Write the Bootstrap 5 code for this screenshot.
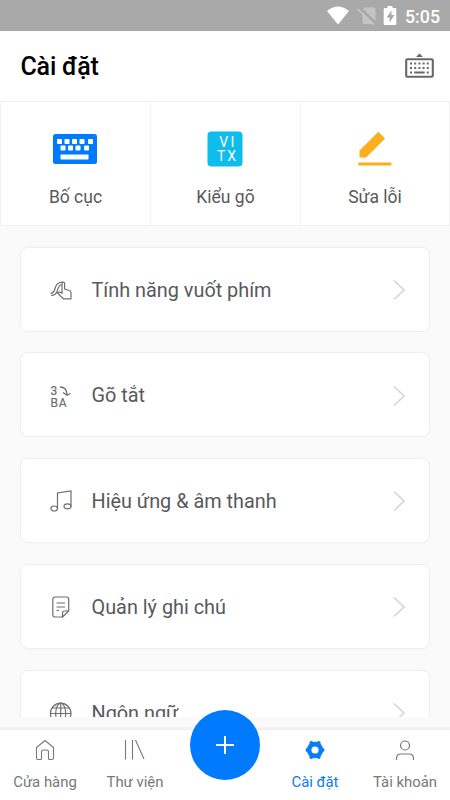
<!DOCTYPE html>
<html lang="vi">
<head>
<meta charset="utf-8">
<meta name="viewport" content="width=device-width, initial-scale=1">
<title>Cài đặt</title>
<link href="https://cdn.jsdelivr.net/npm/bootstrap@5.3.0/dist/css/bootstrap.min.css" rel="stylesheet">
<style>
  body { font-family: Roboto, "Noto Sans", sans-serif; color: #58595b; background: #fafafa; }
  svg { display: block; flex: none; }
  .screen { height: 800px; }
  .status-bar { height: 31px; background: #a9a9a9; font-size: 17.8px; padding: 2px 10px 0 0; }
  .app-header { height: 70px; padding: 0 16px 0 20.5px; }
  .app-title { font-size: 25px; letter-spacing: -.2px; padding-top: 2px; }
  .tiles { height: 125px; }
  .tile { border: 1px solid #f2f2f2; border-right-width: 0; padding-top: 21px; }
  .tile:last-child { border-right-width: 1px; }
  .tile-icon { height: 51px; }
  .tile-label { font-size: 17.5px; line-height: 24px; margin-top: 11px; }
  .settings { height: 491px; padding: 20.5px 20px 0; gap: 20.8px; }
  .setting { height: 85px; flex: none; border: 1px solid #f0f0f0; border-radius: 8px; box-shadow: 0 0 2px #f3f3f3; font-size: 19.85px; padding: 1.5px 23px 0 28px; }
  .setting-name { margin-left: 18.5px; padding-top: 1.5px; }
  .bottom-nav { height: 83px; padding-top: 13px; }
  .nav-panel { height: 70px; box-shadow: 0 -1px 2px 1px #ededed; }
  .nav-cell { font-size: 14.9px; line-height: 20px; padding-top: 8px; color: #77787a; }
  .nav-cell .nav-text { margin-top: 10.2px; white-space: nowrap; }
  .nav-cell.current { color: #0b7cf4; }
  .add-btn { width: 70px; height: 70px; background: #007aff; top: -20px; left: 190px; }
</style>
</head>
<body>
<div class="screen d-flex flex-column overflow-hidden">
  <div class="status-bar d-flex align-items-center justify-content-end text-white fw-medium flex-shrink-0">
    <svg width="78" height="31" viewBox="0 1 78 31">
      <path d="M11 24.500L0 11Q11 2 22 11Z" fill="#fff"/>
      <path d="M37.500 7.500H47q1.500 0 1.500 1.500v12L36 9ZM35.500 12.500l12 11.500H37q-1.500 0-1.500-1.500Z" fill="#c4c4c4"/>
      <path d="M30.500 9l16 15.500" stroke="#c9c9c9" stroke-width="1.500"/>
      <path d="M60.500 6v2h-2.800q-1 0-1 1v15q0 1 1 1h10.600q1 0 1-1V9q0-1-1-1h-2.800V6Z" fill="#fff"/>
      <path d="M64.500 10.500l-5 7h3V22.500l5-7.500h-3Z" fill="#a9a9a9"/>
    </svg>
    <span class="lh-1">5:05</span>
  </div>

  <header class="app-header bg-white d-flex align-items-center justify-content-between flex-shrink-0">
    <div class="app-title fw-medium text-black">Cài đặt</div>
    <svg width="29" height="26" viewBox="0 0 29 26" fill="#66686a">
      <path d="M11 4L14.500.500l3.500 3.500Z"/>
      <rect x="1.200" y="6.200" width="26.600" height="17.600" rx="1" fill="none" stroke="#66686a" stroke-width="2.100"/>
      <path d="M5 9.500h2v2H5zM9.200 9.500h2v2h-2zM13.400 9.500h2v2h-2zM17.600 9.500h2v2h-2zM21.800 9.500h2v2h-2zM5 14h2v2H5zM9.200 14h2v2h-2zM13.400 14h2v2h-2zM17.600 14h2v2h-2zM21.800 14h2v2h-2zM5 18.500h2v2H5zM9.200 18.500h10.400v2H9.200zM21.800 18.500h2v2h-2z"/>
    </svg>
  </header>

  <div class="tiles row g-0 text-center bg-white flex-shrink-0">
    <div class="tile col-4">
      <div class="tile-icon d-flex justify-content-center align-items-center">
        <svg width="44" height="30" viewBox="0 0 44 30"><rect width="44" height="30" rx="2.500" fill="#007aff"/>
          <g fill="#fff"><rect x="4" y="5" width="5" height="5" rx=".8"/><rect x="11.500" y="5" width="5" height="5" rx=".8"/><rect x="19" y="5" width="5" height="5" rx=".8"/><rect x="26.500" y="5" width="5" height="5" rx=".8"/><rect x="35" y="5" width="5" height="5" rx=".8"/>
          <rect x="7.500" y="11.500" width="5" height="5" rx=".8"/><rect x="15" y="11.500" width="5" height="5" rx=".8"/><rect x="22.500" y="11.500" width="5" height="5" rx=".8"/><rect x="31" y="11.500" width="5" height="5" rx=".8"/><rect x="7.500" y="20.500" width="28" height="5" rx=".8"/></g></svg>
      </div>
      <div class="tile-label">Bố cục</div>
    </div>
    <div class="tile col-4">
      <div class="tile-icon d-flex justify-content-center align-items-center">
        <svg width="36" height="36" viewBox="0 0 36 36"><rect x=".5" y=".5" width="35" height="35" rx="4" fill="#0fbcee"/>
          <g fill="#fff" font-size="14"><text x="12.200" y="15.500" textLength="15">VI</text><text x="10" y="29.500" textLength="19">TX</text></g></svg>
      </div>
      <div class="tile-label">Kiểu gõ</div>
    </div>
    <div class="tile col-4">
      <div class="tile-icon d-flex justify-content-center align-items-center">
        <svg width="34" height="36" viewBox="0 0 34 36" fill="#fbaf1c"><path d="M1.500 26.500V19.500L20.300.8l6.800 6.800-19 18.900ZM.3 31.500h33v3H.3z"/></svg>
      </div>
      <div class="tile-label">Sửa lỗi</div>
    </div>
  </div>

  <main class="settings d-flex flex-column overflow-hidden flex-shrink-0">
    <div class="setting bg-white d-flex align-items-center">
      <svg width="24" height="24" viewBox="0 0 24 24" fill="none" stroke="#6d6e70" stroke-width="1.200" stroke-linejoin="round">
        <path d="M1.500 15.500q3.500-.5 4.500-5 1.500-6.300 7.500-6.300M2 17.500q5 0 6.500-5 1-5 4-6"/><path d="M11.500 18l-3-3q1.500-1.700 4.500.3V5q1.300-1.800 2.600 0v6l4.600 1.500q1.800.5 1.800 2.300v6h-7.600L11.500 18"/>
      </svg>
      <span class="setting-name">Tính năng vuốt phím</span>
      <svg class="ms-auto" width="14" height="22" viewBox="0 0 14 22" fill="none" stroke="#d5d5d5" stroke-width="1.600"><path d="M2 1.500l10 9.500L2 20.500"/></svg>
    </div>
    <div class="setting bg-white d-flex align-items-center">
      <svg width="24" height="24" viewBox="0 0 24 24">
        <g fill="#6d6e70" stroke="#6d6e70" stroke-width=".2" font-size="12"><text x="1.500" y="10.500">3</text><text x="1.500" y="22.500" textLength="16">BA</text></g>
        <path d="M11 3q7 0 7 8M14 8.500l4 2.800 3.500-1.800" fill="none" stroke="#6d6e70" stroke-width="1.300"/>
      </svg>
      <span class="setting-name">Gõ tắt</span>
      <svg class="ms-auto" width="14" height="22" viewBox="0 0 14 22" fill="none" stroke="#d5d5d5" stroke-width="1.600"><path d="M2 1.500l10 9.500L2 20.500"/></svg>
    </div>
    <div class="setting bg-white d-flex align-items-center">
      <svg width="24" height="24" viewBox="0 0 24 24" fill="none" stroke="#6d6e70" stroke-width="1.200">
        <path d="M8.500 20V4L22 2V18"/><ellipse cx="5.200" cy="19.500" rx="3.300" ry="2.500"/><ellipse cx="18.500" cy="17.300" rx="3.500" ry="2.500"/>
      </svg>
      <span class="setting-name">Hiệu ứng &amp; âm thanh</span>
      <svg class="ms-auto" width="14" height="22" viewBox="0 0 14 22" fill="none" stroke="#d5d5d5" stroke-width="1.600"><path d="M2 1.500l10 9.500L2 20.500"/></svg>
    </div>
    <div class="setting bg-white d-flex align-items-center">
      <svg width="24" height="24" viewBox="0 0 24 24" fill="none" stroke="#6d6e70" stroke-width="1.200">
        <path d="M13.500 22H6q-2.200 0-2.200-2.200V4.200Q3.800 2 6 2h11.500q2.200 0 2.200 2.200V16l-6.200 6v-4q0-2 2-2h4.200M7.500 8H16M7.500 12H16M7.500 15.500H10"/>
      </svg>
      <span class="setting-name">Quản lý ghi chú</span>
      <svg class="ms-auto" width="14" height="22" viewBox="0 0 14 22" fill="none" stroke="#d5d5d5" stroke-width="1.600"><path d="M2 1.500l10 9.500L2 20.500"/></svg>
    </div>
    <div class="setting bg-white d-flex align-items-center">
      <svg width="24" height="24" viewBox="0 0 24 24" fill="none" stroke="#6d6e70" stroke-width="1.200">
        <circle cx="11.700" cy="12.500" r="10.300"/><ellipse cx="11.700" cy="12.500" rx="5" ry="10.300"/><path d="M11.700 2v21M1.500 12.500h20.500M3.300 7h17M3.300 18h17"/>
      </svg>
      <span class="setting-name">Ngôn ngữ</span>
      <svg class="ms-auto" width="14" height="22" viewBox="0 0 14 22" fill="none" stroke="#d5d5d5" stroke-width="1.600"><path d="M2 1.500l10 9.500L2 20.500"/></svg>
    </div>
  </main>

  <footer class="bottom-nav flex-shrink-0">
    <nav class="nav-panel bg-white d-flex position-relative text-center">
      <div class="nav-cell flex-fill w-25">
        <svg class="mx-auto" width="24" height="24" viewBox="0 0 24 24" fill="none" stroke="#77787a" stroke-width="1.100" stroke-linejoin="round"><path d="M5 21.500q-1.500 0-1.500-1.500V9.500L12 2.500l8.500 7V20q0 1.500-1.500 1.500h-2.500q-1 0-1-1V14q0-2-2-2h-3q-2 0-2 2v6.500q0 1-1 1Z"/></svg>
        <div class="nav-text">Cửa hàng</div>
      </div>
      <div class="nav-cell flex-fill w-25">
        <svg class="mx-auto" width="24" height="24" viewBox="0 0 24 24" fill="none" stroke="#77787a" stroke-width="1.100"><path d="M2.500 2v19.500M9.500 2v19.500M12.500 2l8.500 19"/></svg>
        <div class="nav-text">Thư viện</div>
      </div>
      <div class="nav-cell flex-fill w-25"></div>
      <div class="nav-cell current flex-fill w-25">
        <svg class="mx-auto" width="24" height="24" viewBox="0 0 24 24"><g fill="#0b7cf4"><circle cx="12" cy="12" r="8.200"/><circle cx="8.300" cy="5" r="2"/><circle cx="15.700" cy="5" r="2"/><circle cx="19.500" cy="12" r="2"/><circle cx="15.700" cy="19" r="2"/><circle cx="8.300" cy="19" r="2"/><circle cx="4.500" cy="12" r="2"/></g><circle cx="12" cy="12" r="3.600" fill="#fff"/></svg>
        <div class="nav-text">Cài đặt</div>
      </div>
      <div class="nav-cell flex-fill w-25">
        <svg class="mx-auto" width="24" height="24" viewBox="0 -.5 24 24" fill="none" stroke="#77787a" stroke-width="1.200"><circle cx="12" cy="7" r="4.500"/><path d="M3.500 21.500V20q0-4.500 4.500-4.500h8q4.500 0 4.500 4.500v1.500"/></svg>
        <div class="nav-text">Tài khoản</div>
      </div>
      <button class="add-btn btn rounded-circle border-0 p-0 position-absolute d-flex align-items-center justify-content-center" type="button" aria-label="Thêm">
        <svg width="18" height="18" viewBox="0 0 18 18" stroke="#fff" stroke-width="2"><path d="M9 0v18M0 9h18"/></svg>
      </button>
    </nav>
  </footer>
</div>
<script src="https://cdn.jsdelivr.net/npm/bootstrap@5.3.0/dist/js/bootstrap.bundle.min.js"></script>
</body>
</html>
